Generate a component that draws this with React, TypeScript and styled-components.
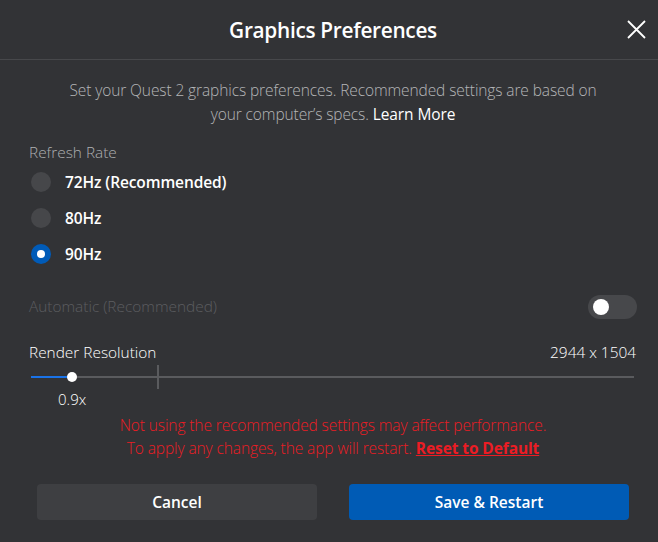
import React from "react";
import styled, { createGlobalStyle } from "styled-components";

const Global = createGlobalStyle`
  html, body { margin: 0; padding: 0; background: #323336; }
  body { font-family: "Open Sans", "Noto Sans", sans-serif; -webkit-font-smoothing: antialiased; }
`;

const Dialog = styled.div`
  width: 658px;
  height: 542px;
  background: #323336;
  color: #fff;
  display: flex;
  flex-direction: column;
  overflow: hidden;
`;

const Header = styled.header`
  height: 59px;
  border-bottom: 1px solid #47484b;
  display: grid;
  grid-template-columns: 1fr auto 1fr;
  align-items: center;
`;

const Title = styled.h1`
  grid-column: 2;
  margin: 0 0 0 8px;
  font-size: 20.8px;
  font-weight: 600;
  letter-spacing: -0.3px;
  color: #fff;
`;

const CloseButton = styled.button`
  grid-column: 3;
  justify-self: end;
  margin-right: 12px;
  width: 20px;
  height: 20px;
  padding: 0;
  border: none;
  background: transparent;
  display: flex;
  align-items: center;
  justify-content: center;
  cursor: pointer;
`;

const Body = styled.div`
  flex: 1;
  display: flex;
  flex-direction: column;
  padding: 0 21px 0 29px;
`;

const Description = styled.p`
  margin: 18px 0 0;
  text-align: center;
  font-size: 15.5px;
  font-weight: 300;
  line-height: 24px;
  color: #b5b6b8;
  letter-spacing: -0.1px;
`;

const LinkWhite = styled.span`
  color: #fff;
  font-weight: 400;
`;

const SectionLabel = styled.div<{ $dim?: boolean }>`
  font-size: 15.4px;
  font-weight: 300;
  line-height: 20px;
  color: ${(p) => (p.$dim ? "#5c5d60" : "#aeafb1")};
`;

const RefreshLabel = styled(SectionLabel)`
  margin-top: 17px;
`;

const RadioList = styled.div`
  display: flex;
  flex-direction: column;
  margin-top: 1px;
`;

const RadioRow = styled.label`
  height: 36px;
  display: flex;
  align-items: center;
  gap: 14px;
  padding-left: 2px;
  font-size: 15.5px;
  font-weight: 600;
  color: #fff;
  letter-spacing: -0.1px;
`;

const RadioCircle = styled.span<{ $checked?: boolean }>`
  width: 20px;
  height: 20px;
  border-radius: 50%;
  background: ${(p) => (p.$checked ? "#005bb8" : "#46474a")};
  display: flex;
  align-items: center;
  justify-content: center;
  &::after {
    content: "";
    width: 8px;
    height: 8px;
    border-radius: 50%;
    background: #fff;
    display: ${(p) => (p.$checked ? "block" : "none")};
  }
`;

const AutoRow = styled.div`
  margin-top: 23px;
  height: 24px;
  display: flex;
  align-items: center;
  justify-content: space-between;
`;

const Toggle = styled.span`
  width: 49px;
  height: 24px;
  border-radius: 12px;
  background: #47484b;
  display: flex;
  align-items: center;
  padding-left: 5px;
  box-sizing: border-box;
  &::before {
    content: "";
    width: 16px;
    height: 16px;
    border-radius: 50%;
    background: #fff;
  }
`;

const ResolutionHeader = styled.div`
  margin-top: 23px;
  height: 20px;
  padding-right: 1px;
  display: flex;
  justify-content: space-between;
  align-items: center;
  font-size: 15.4px;
  font-weight: 300;
  color: #fff;
`;

const SliderWrap = styled.div`
  position: relative;
  margin: 3px 3px 0 2px;
  height: 24px;
`;

const Track = styled.div`
  position: absolute;
  left: 0;
  right: 0;
  top: 11px;
  height: 2px;
  background: #5a5b5e;
`;

const Fill = styled.div`
  position: absolute;
  left: 0;
  top: 11px;
  height: 2px;
  background: #1a73e8;
`;

const Tick = styled.div`
  position: absolute;
  top: 0;
  width: 2px;
  height: 24px;
  background: #5a5b5e;
`;

const Knob = styled.div`
  position: absolute;
  top: 7px;
  width: 10px;
  height: 10px;
  margin-left: -5px;
  border-radius: 50%;
  background: #fff;
`;

const SliderValue = styled.div`
  height: 20px;
  padding-left: 29px;
  font-size: 15px;
  font-weight: 300;
  color: #fff;
  line-height: 20px;
`;

const Warning = styled.p`
  margin: 5px 0 0;
  text-align: center;
  font-size: 15.5px;
  font-weight: 300;
  line-height: 23px;
  color: #ec1c24;
  letter-spacing: -0.1px;
`;

const ResetLink = styled.a`
  color: #ec1c24;
  font-weight: 700;
  text-decoration: underline;
  cursor: pointer;
`;

const Buttons = styled.div`
  margin-top: 24px;
  display: grid;
  grid-template-columns: 280px 280px;
  justify-content: space-between;
  padding: 0 0 0 8px;
  width: 600px;
  box-sizing: border-box;
`;

const Button = styled.button<{ $primary?: boolean }>`
  height: 36px;
  border: none;
  border-radius: 4px;
  background: ${(p) => (p.$primary ? "#005bb5" : "#3e3f42")};
  color: #fff;
  font-family: inherit;
  font-size: 15.5px;
  font-weight: 600;
  cursor: pointer;
`;

const rates = [
  { label: "72Hz (Recommended)", checked: false },
  { label: "80Hz", checked: false },
  { label: "90Hz", checked: true },
];

export default function App() {
  const knobX = 41;
  return (
    <>
      <Global />
      <Dialog>
        <Header>
          <Title>Graphics Preferences</Title>
          <CloseButton aria-label="Close">
            <svg width="19" height="19" viewBox="0 0 19 19">
              <path d="M1 1L18 18M18 1L1 18" stroke="#fff" strokeWidth="1.8" />
            </svg>
          </CloseButton>
        </Header>
        <Body>
          <Description>
            Set your Quest 2 graphics preferences. Recommended settings are based on
            <br />
            your computer’s specs. <LinkWhite>Learn More</LinkWhite>
          </Description>
          <RefreshLabel>Refresh Rate</RefreshLabel>
          <RadioList>
            {rates.map((r) => (
              <RadioRow key={r.label}>
                <RadioCircle $checked={r.checked} />
                {r.label}
              </RadioRow>
            ))}
          </RadioList>
          <AutoRow>
            <SectionLabel $dim>Automatic (Recommended)</SectionLabel>
            <Toggle />
          </AutoRow>
          <ResolutionHeader>
            <span>Render Resolution</span>
            <span>2944 x 1504</span>
          </ResolutionHeader>
          <SliderWrap>
            <Track />
            <Fill style={{ width: knobX }} />
            <Tick style={{ left: 126 }} />
            <Knob style={{ left: knobX }} />
          </SliderWrap>
          <SliderValue>0.9x</SliderValue>
          <Warning>
            Not using the recommended settings may affect performance.
            <br />
            To apply any changes, the app will restart. <ResetLink>Reset to Default</ResetLink>
          </Warning>
          <Buttons>
            <Button>Cancel</Button>
            <Button $primary>Save &amp; Restart</Button>
          </Buttons>
        </Body>
      </Dialog>
    </>
  );
}
